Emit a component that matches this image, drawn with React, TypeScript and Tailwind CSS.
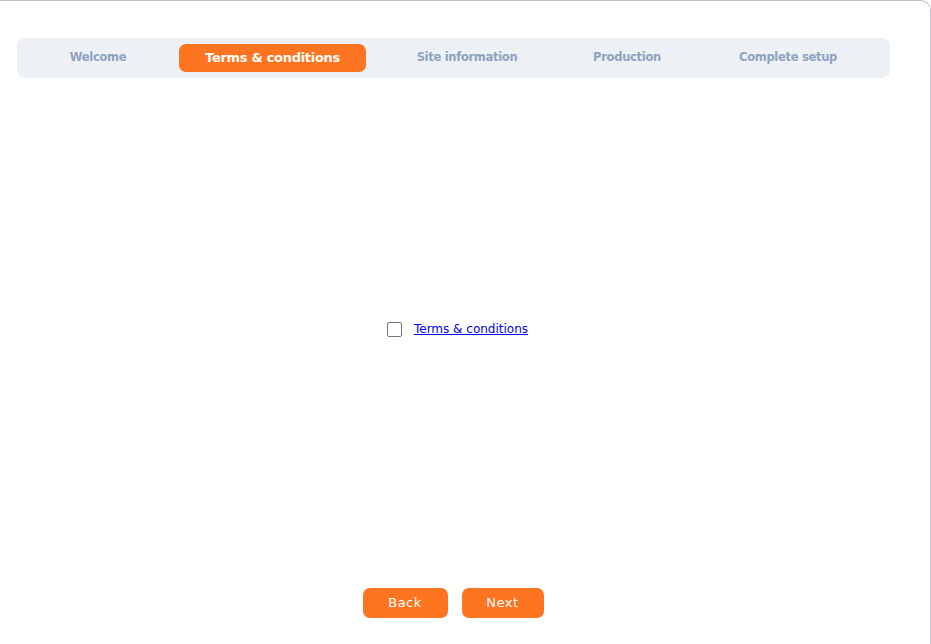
import React from "react";

const tabs = [
  { label: "Welcome", w: "w-[110px]", active: false },
  { label: "Terms & conditions", w: "w-[187px]", active: true },
  { label: "Site information", w: "w-[150px]", active: false },
  { label: "Production", w: "w-[118px]", active: false },
  { label: "Complete setup", w: "w-[152px]", active: false },
];

export default function App() {
  return (
    <div className="w-[931px] h-[644px] overflow-hidden bg-white" style={{ fontFamily: '"DejaVu Sans", sans-serif' }}>
      <div className="h-[660px] flex flex-col border-t border-r border-[#c3c6c9] rounded-tr-[10px] pt-[37px] pl-[17px] pr-[40px]">
        <div className="h-[40px] rounded-[8px] bg-[#edf0f4] flex items-center justify-between px-[26px]">
          {tabs.map((t) =>
            t.active ? (
              <div
                key={t.label}
                className={`${t.w} h-[28px] rounded-[7px] bg-[#ff7420] text-white flex items-center justify-center text-[13px] font-bold tracking-[-0.3px]`}
              >
                {t.label}
              </div>
            ) : (
              <div
                key={t.label}
                className={`${t.w} h-[28px] flex items-center justify-center text-[11.5px] font-bold text-[#8ea3c1] tracking-[-0.3px]`}
              >
                {t.label}
              </div>
            )
          )}
        </div>
        <div className="flex-1 flex items-center justify-center">
          <div className="flex items-center gap-[12px] ml-[8px] mt-[-8px]">
            <span className="w-[15px] h-[15px] border border-[#767676] rounded-[2px] bg-white mt-[1px]" />
            <a href="#" className="text-[12px] text-[#0000ee] underline">
              Terms &amp; conditions
            </a>
          </div>
        </div>
        <div className="flex justify-center gap-[14px] pb-[42px] pr-[1px]">
          <button className="w-[85px] h-[30px] rounded-[7px] bg-[#ff7420] text-white text-[13px] font-medium tracking-[0.5px]">
            Back
          </button>
          <button className="w-[82px] h-[30px] rounded-[7px] bg-[#ff7420] text-white text-[13px] font-medium tracking-[0.5px]">
            Next
          </button>
        </div>
      </div>
    </div>
  );
}
